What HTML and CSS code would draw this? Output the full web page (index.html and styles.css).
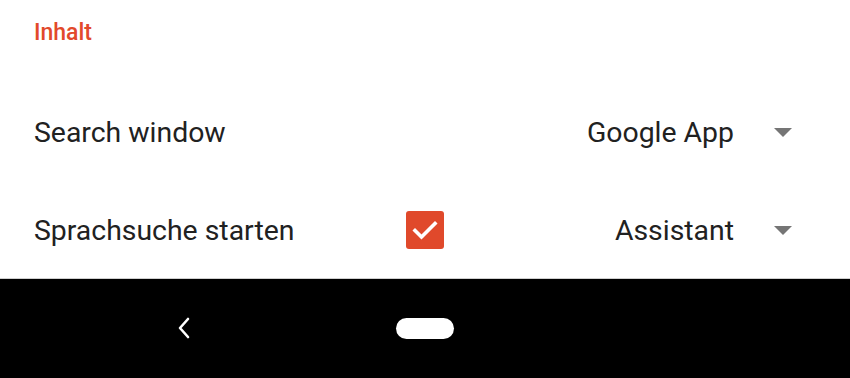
FILE: index.html
```html
<!DOCTYPE html>
<html>
<head>
<meta charset="utf-8">
<link rel="stylesheet" href="styles.css">
</head>
<body>
<div class="screen">
  <main class="content">
    <h2 class="section-title">Inhalt</h2>
    <div class="row">
      <span class="label">Search window</span>
      <span class="check-slot"></span>
      <div class="spinner">
        <span class="spinner-text">Google App</span>
        <span class="arrow"></span>
      </div>
    </div>
    <div class="row">
      <span class="label">Sprachsuche starten</span>
      <span class="check-slot">
        <span class="checkbox">
          <svg width="26" height="20" viewBox="0 0 26 20"><path d="M3 10.5 L9.5 17 L23 3.5" fill="none" stroke="#fff" stroke-width="3.6" stroke-linecap="square"/></svg>
        </span>
      </span>
      <div class="spinner">
        <span class="spinner-text">Assistant</span>
        <span class="arrow"></span>
      </div>
    </div>
  </main>
  <nav class="navbar">
    <span class="back">
      <svg width="14" height="24" viewBox="0 0 14 24"><path d="M11 2 L3 11 L11 20" fill="none" stroke="#fff" stroke-width="2.6" stroke-linecap="round" stroke-linejoin="round"/></svg>
    </span>
    <span class="home"></span>
  </nav>
</div>
</body>
</html>
```
FILE: styles.css
```css
* { box-sizing: border-box; }
html, body { margin: 0; padding: 0; }
body {
  width: 850px;
  height: 378px;
  overflow: hidden;
  background: #fff;
  font-family: Roboto, "Noto Sans", sans-serif;
}
.screen {
  display: flex;
  flex-direction: column;
  height: 378px;
}
.content {
  height: 279px;
  padding: 0 58px 0 34px;
  border-bottom: 1px solid #cfcfcf;
}
.section-title {
  margin: 0;
  height: 83px;
  padding-top: 18px;
  font-size: 23px;
  font-weight: 500;
  color: #e2492b;
  line-height: 30px;
}
.row {
  display: flex;
  align-items: center;
  height: 98px;
}
.label {
  width: 372px;
  font-size: 28.4px;
  color: #212121;
  line-height: 34px;
  padding-top: 1px;
}
.check-slot {
  width: 38px;
  height: 38px;
  display: flex;
}
.checkbox {
  width: 38px;
  height: 38px;
  border-radius: 3px;
  background: #e0492b;
  display: flex;
  align-items: center;
  justify-content: center;
}
.spinner {
  flex: 1;
  display: flex;
  align-items: center;
  justify-content: flex-end;
}
.spinner-text {
  font-size: 28.4px;
  line-height: 34px;
  padding-top: 1px;
  color: #212121;
  margin-right: 40px;
}
.arrow {
  width: 0;
  height: 0;
  border-left: 9px solid transparent;
  border-right: 9px solid transparent;
  border-top: 9px solid #757575;
}
.navbar {
  flex: 1;
  background: #000;
  display: flex;
  align-items: center;
  padding-left: 177px;
}
.back {
  display: flex;
  width: 14px;
  height: 24px;
  margin-right: 205px;
}
.home {
  width: 58px;
  height: 21px;
  border-radius: 11px;
  background: #fff;
}
```
